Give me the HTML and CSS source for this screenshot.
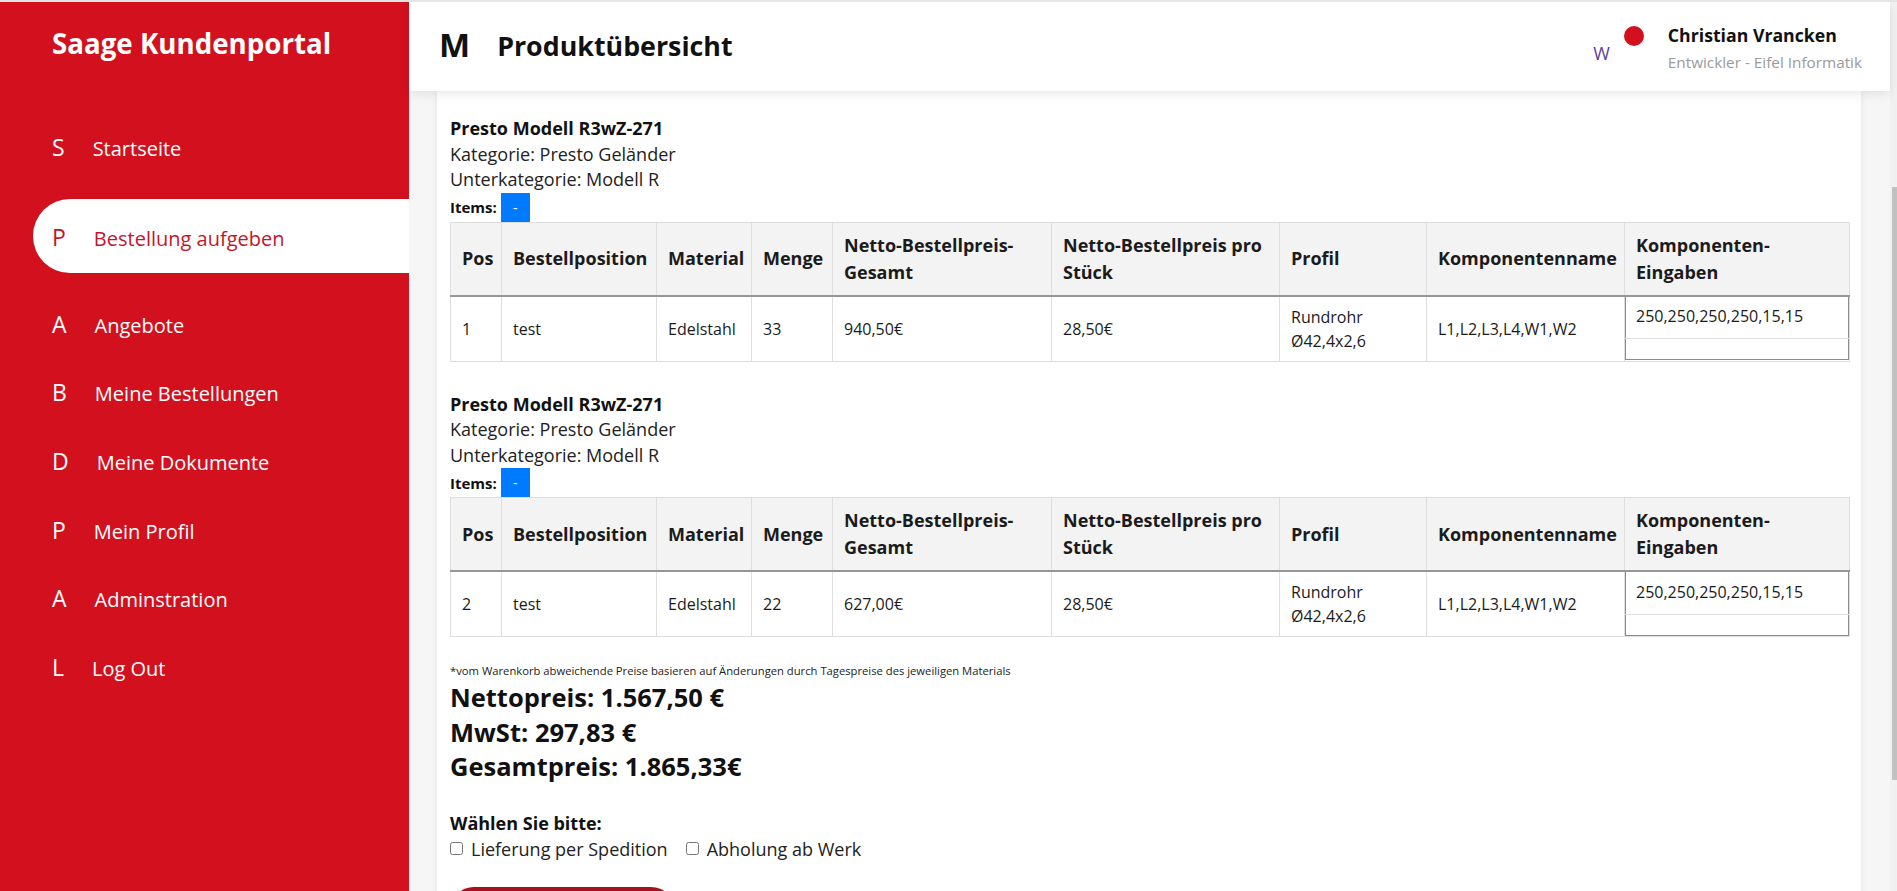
FILE: index.html
```html
<!DOCTYPE html>
<html lang="de">
<head>
<meta charset="utf-8">
<title>Saage Kundenportal – Produktübersicht</title>
<link rel="stylesheet" href="styles.css">
</head>
<body>
<div class="app">
  <aside class="sidebar">
    <div class="brand">Saage Kundenportal</div>
    <nav class="nav">
      <a class="nav-item"><span class="nav-icon">S</span><span class="nav-label">Startseite</span></a>
      <a class="nav-item active"><span class="nav-icon">P</span><span class="nav-label">Bestellung aufgeben</span></a>
      <a class="nav-item"><span class="nav-icon">A</span><span class="nav-label">Angebote</span></a>
      <a class="nav-item"><span class="nav-icon">B</span><span class="nav-label">Meine Bestellungen</span></a>
      <a class="nav-item"><span class="nav-icon">D</span><span class="nav-label">Meine Dokumente</span></a>
      <a class="nav-item"><span class="nav-icon">P</span><span class="nav-label">Mein Profil</span></a>
      <a class="nav-item"><span class="nav-icon">A</span><span class="nav-label">Adminstration</span></a>
      <a class="nav-item"><span class="nav-icon">L</span><span class="nav-label">Log Out</span></a>
    </nav>
  </aside>

  <div class="main">
    <header class="topbar">
      <div class="page-title">
        <span class="page-icon">M</span>
        <h1 class="page-heading">Produktübersicht</h1>
      </div>
      <div class="user">
        <span class="notif">W</span>
        <span class="status-dot"></span>
        <div class="user-info">
          <div class="user-name">Christian Vrancken</div>
          <div class="user-role">Entwickler - Eifel Informatik</div>
        </div>
      </div>
    </header>

    <div class="content">
      <section class="card">
        <div class="product">
          <div class="product-title">Presto Modell R3wZ-271</div>
          <div class="product-line">Kategorie: Presto Geländer</div>
          <div class="product-line">Unterkategorie: Modell R</div>
          <div class="items-row"><span class="items-label">Items:</span><button class="toggle-btn">-</button></div>
          <table class="order-table">
            <colgroup>
              <col class="c-pos"><col class="c-best"><col class="c-mat"><col class="c-menge"><col class="c-ges"><col class="c-stk"><col class="c-prof"><col class="c-kname"><col class="c-kein">
            </colgroup>
            <thead>
              <tr>
                <th>Pos</th><th>Bestellposition</th><th>Material</th><th>Menge</th><th>Netto-Bestellpreis-Gesamt</th><th>Netto-Bestellpreis pro Stück</th><th>Profil</th><th>Komponentenname</th><th>Komponenten-Eingaben</th>
              </tr>
            </thead>
            <tbody>
              <tr>
                <td>1</td><td>test</td><td>Edelstahl</td><td>33</td><td>940,50€</td><td>28,50€</td><td>Rundrohr Ø42,4x2,6</td><td>L1,L2,L3,L4,W1,W2</td>
                <td class="nested-cell">
                  <table class="nested-table">
                    <tr><td class="nested-val">250,250,250,250,15,15</td></tr>
                    <tr><td class="nested-empty"></td></tr>
                  </table>
                </td>
              </tr>
            </tbody>
          </table>
        </div>

        <div class="product">
          <div class="product-title">Presto Modell R3wZ-271</div>
          <div class="product-line">Kategorie: Presto Geländer</div>
          <div class="product-line">Unterkategorie: Modell R</div>
          <div class="items-row"><span class="items-label">Items:</span><button class="toggle-btn">-</button></div>
          <table class="order-table">
            <colgroup>
              <col class="c-pos"><col class="c-best"><col class="c-mat"><col class="c-menge"><col class="c-ges"><col class="c-stk"><col class="c-prof"><col class="c-kname"><col class="c-kein">
            </colgroup>
            <thead>
              <tr>
                <th>Pos</th><th>Bestellposition</th><th>Material</th><th>Menge</th><th>Netto-Bestellpreis-Gesamt</th><th>Netto-Bestellpreis pro Stück</th><th>Profil</th><th>Komponentenname</th><th>Komponenten-Eingaben</th>
              </tr>
            </thead>
            <tbody>
              <tr>
                <td>2</td><td>test</td><td>Edelstahl</td><td>22</td><td>627,00€</td><td>28,50€</td><td>Rundrohr Ø42,4x2,6</td><td>L1,L2,L3,L4,W1,W2</td>
                <td class="nested-cell">
                  <table class="nested-table">
                    <tr><td class="nested-val">250,250,250,250,15,15</td></tr>
                    <tr><td class="nested-empty"></td></tr>
                  </table>
                </td>
              </tr>
            </tbody>
          </table>
        </div>

        <p class="note">*vom Warenkorb abweichende Preise basieren auf Änderungen durch Tagespreise des jeweiligen Materials</p>
        <div class="totals">
          <div class="total-line">Nettopreis: 1.567,50 €</div>
          <div class="total-line">MwSt: 297,83 €</div>
          <div class="total-line">Gesamtpreis: 1.865,33€</div>
        </div>

        <div class="choose-label">Wählen Sie bitte:</div>
        <div class="choose-row">
          <label class="choice"><input type="checkbox" class="choice-box">Lieferung per Spedition</label>
          <label class="choice"><input type="checkbox" class="choice-box">Abholung ab Werk</label>
        </div>
        <button class="submit-btn" aria-label="Bestellung absenden"></button>
      </section>
    </div>
  </div>

  <div class="scrollbar"><div class="scroll-thumb"></div></div>
</div>
</body>
</html>
```

FILE: styles.css
```css
* { box-sizing: border-box; }

html, body {
  margin: 0;
  padding: 0;
  height: 100%;
  overflow: hidden;
}

body {
  font-family: "Open Sans", "Noto Sans", "Liberation Sans", sans-serif;
  color: #1b1b1b;
  background: #e6e6e6;
}

.app {
  display: flex;
  height: 100vh;
  border-top: 2px solid #e4e4e4;
  overflow: hidden;
}

/* ---------- Sidebar ---------- */
.sidebar {
  width: 409px;
  flex: 0 0 409px;
  background: #d3101e;
  color: #fff;
  padding-top: 22px;
}

.brand {
  font-weight: 700;
  font-size: 27.7px;
  line-height: 38px;
  padding-left: 52px;
}

.nav {
  display: flex;
  flex-direction: column;
  margin-top: 51.5px;
}

.nav-item {
  display: flex;
  align-items: center;
  height: 68.6px;
  padding-left: 52px;
  color: #fff;
  text-decoration: none;
}

.nav-icon {
  font-size: 23px;
  margin-right: 28px;
  line-height: 1;
}

.nav-label {
  font-size: 20px;
  line-height: 1;
  padding-top: 3px;
}

.nav-item.active {
  background: #fff;
  color: #c4162a;
  height: 74px;
  margin: 16.5px 0 17.5px 33px;
  padding-left: 19px;
  border-radius: 37px 0 0 37px;
}

.nav-item.active .nav-label {
  padding-top: 7px;
}
.nav-item.active .nav-icon {
  padding-top: 4px;
}

/* ---------- Main ---------- */
.main {
  flex: 1;
  display: flex;
  flex-direction: column;
  min-width: 0;
}

.topbar {
  position: relative;
  z-index: 2;
  height: 89px;
  flex: 0 0 89px;
  background: #fff;
  display: flex;
  justify-content: space-between;
  align-items: flex-start;
  padding: 0 28px 0 30px;
  box-shadow: 0 3px 10px rgba(0, 0, 0, 0.09);
}

.page-title {
  display: flex;
  align-items: center;
  height: 84px;
}

.page-icon {
  font-size: 33px;
  font-weight: 700;
  margin-right: 27px;
  color: #111;
}

.page-heading {
  margin: 0;
  font-size: 26.8px;
  font-weight: 700;
  color: #111;
  padding-top: 2px;
}

.user {
  display: flex;
  align-items: flex-start;
  padding-top: 20px;
}

.notif {
  font-size: 18px;
  line-height: 24px;
  color: #5d3f9e;
  margin-top: 18.5px;
  margin-right: 14px;
}

.status-dot {
  width: 20px;
  height: 20px;
  border-radius: 50%;
  background: #d3101e;
  margin-top: 4px;
  margin-right: 24px;
}

.user-name {
  font-size: 17.7px;
  font-weight: 700;
  line-height: 26px;
  color: #111;
}

.user-role {
  font-size: 15.3px;
  line-height: 22px;
  color: #9a9a9a;
  margin-top: 3px;
}

/* ---------- Content ---------- */
.content {
  flex: 1;
  background: #f6f6f6;
  overflow: hidden;
  padding: 0 29px 0 28px;
}

.card {
  background: #fff;
  min-height: 100%;
  padding: 25px 12px 0 13px;
  box-shadow: 0 0 7px rgba(0, 0, 0, 0.07);
}

.product + .product {
  margin-top: 30px;
}

.product-title {
  font-weight: 700;
  font-size: 18px;
  line-height: 25.5px;
  color: #111;
}

.product-line {
  font-size: 18px;
  line-height: 25.5px;
  color: #222;
}

.items-row {
  display: flex;
  align-items: center;
  height: 29px;
}

.items-label {
  font-weight: 700;
  font-size: 15px;
  color: #111;
  margin-right: 4px;
}

.toggle-btn {
  width: 29px;
  height: 29px;
  border: 0;
  padding: 0;
  background: #007bff;
  color: #fff;
  font-family: inherit;
  font-size: 14px;
  line-height: 29px;
}

/* ---------- Table ---------- */
.order-table {
  width: 100%;
  table-layout: fixed;
  border-collapse: collapse;
  color: #1b1b1b;
}

.c-pos { width: 51px; }
.c-best { width: 155px; }
.c-mat { width: 95px; }
.c-menge { width: 81px; }
.c-ges { width: 219px; }
.c-stk { width: 228px; }
.c-prof { width: 147px; }
.c-kname { width: 198px; }
.c-kein { width: 225px; }

.order-table th {
  background: #f3f3f3;
  font-size: 18px;
  font-weight: 700;
  line-height: 27px;
  text-align: left;
  vertical-align: middle;
  padding: 9px 10px 9px 11px;
  border: 1px solid #dedede;
  border-bottom: 2px solid #979797;
  height: 73px;
}

.order-table td {
  font-size: 16px;
  line-height: 24px;
  padding: 8px 10px 8px 11px;
  border: 1px solid #dedede;
  vertical-align: middle;
  height: 64px;
}

.order-table td.nested-cell {
  padding: 0;
  vertical-align: top;
}

.nested-table {
  width: 100%;
  border-collapse: collapse;
  border: 1px solid #8c8c8c;
  border-top: 0;
}

.nested-table td {
  border: 0;
  border-bottom: 1px solid #dedede;
  padding: 0 10px;
  height: auto;
}

.nested-table td.nested-val {
  height: 42px;
  padding-bottom: 2px;
}

.nested-table td.nested-empty {
  height: 21px;
  border-bottom: 0;
}

/* ---------- Totals ---------- */
.note {
  margin: 26px 0 0;
  font-size: 11.24px;
  line-height: 16px;
  color: #222;
}

.totals {
  margin-top: 1px;
}

.total-line {
  font-size: 25.5px;
  font-weight: 700;
  line-height: 34.5px;
  color: #111;
}

.choose-label {
  margin-top: 26px;
  font-size: 18px;
  font-weight: 700;
  line-height: 27px;
  color: #111;
}

.choose-row {
  display: flex;
  gap: 18px;
  line-height: 24px;
}

.choice {
  display: flex;
  align-items: center;
  font-size: 18px;
  color: #222;
}

.choice-box {
  width: 13px;
  height: 13px;
  margin: 0 8px 0 0;
}

.submit-btn {
  display: block;
  margin-top: 26px;
  width: 225px;
  height: 48px;
  border: 0;
  border-radius: 24px;
  background: #a9101c;
}

/* ---------- Scrollbar ---------- */
.scrollbar {
  width: 7px;
  flex: 0 0 7px;
  background: #f1f1f1;
}

.scroll-thumb {
  margin: 185px 0 0 2px;
  width: 5px;
  height: 593px;
  background: #c1c1c1;
}
```
